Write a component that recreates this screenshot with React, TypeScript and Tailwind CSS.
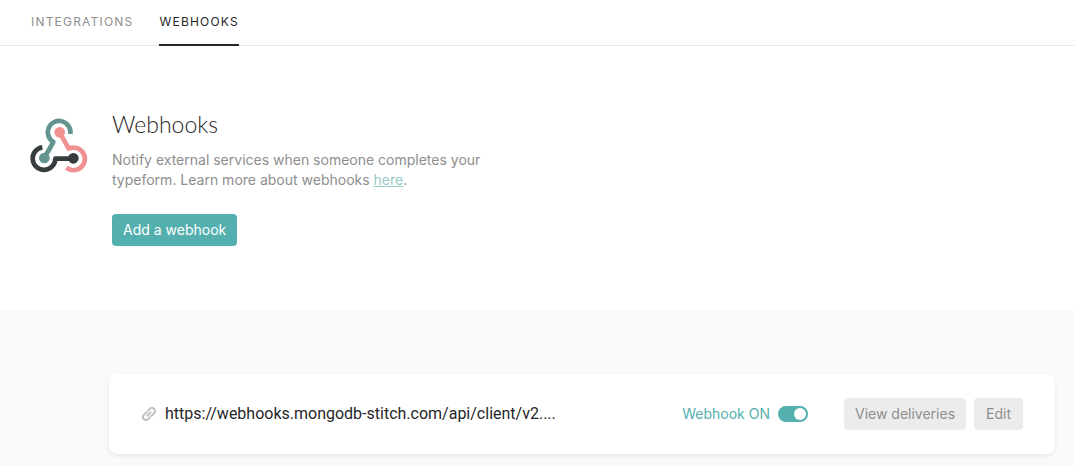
import { useState } from "react";

function WebhookLogo() {
  return (
    <svg width="57" height="54" viewBox="33 29 171 162" fill="none" strokeWidth="14" aria-hidden="true" className="shrink-0 overflow-visible">
      <path d="M151 77A34 34 0 1 0 100 101L73 149" stroke="#64948f" strokeLinejoin="round" />
      <path d="M67 117A34 34 0 1 0 106 151H160" stroke="#373c3f" strokeLinejoin="round" />
      <path d="M119 72L146 121A34 34 0 1 1 139 178" stroke="#f09090" strokeLinejoin="round" />
      <circle cx="73" cy="149" r="16" fill="#64948f" />
      <circle cx="160" cy="150" r="16" fill="#373c3f" />
      <circle cx="119" cy="72" r="16" fill="#f09090" />
    </svg>
  );
}

function LinkIcon() {
  return (
    <svg width="16" height="16" viewBox="0 0 16 16" fill="none" stroke="#bdbdbd" strokeWidth="1.9" aria-hidden="true" className="shrink-0">
      <path d="M6.600 5L8.800 2.900A3 3 0 0 1 13.100 7.200L11 9.300Q10.300 10 9.300 10" />
      <path d="M9.400 11L7.200 13.100A3 3 0 0 1 2.900 8.800L5 6.700Q5.700 6 6.700 6" />
      <path d="M5.800 10.200L10.200 5.800" />
    </svg>
  );
}

export default function App() {
  const [on, setOn] = useState(true);
  return (
    <div className="bg-white font-['Inter',sans-serif] text-sm text-[#8e8e8e]">
      <nav className="flex gap-[26px] border-b border-[#e8e8e8] pl-[31px] text-xs leading-4 tracking-widest">
        <a href="#integrations" className="pt-3.5 pb-[15px]">INTEGRATIONS</a>
        <a href="#webhooks" aria-current="page" className="-mb-px border-b-2 border-[#262627] pt-3.5 text-[#262627]">WEBHOOKS</a>
      </nav>
      <main>
        <section className="flex gap-6 pt-16 pb-16 pl-[31px]">
          <div className="pt-2"><WebhookLogo /></div>
          <div className="max-w-[380px]">
            <h1 className="font-['Lato',sans-serif] text-[23px] leading-7 font-light text-[#262627]">Webhooks</h1>
            <p className="mt-3 leading-5">
              Notify external services when someone completes your typeform. Learn more about webhooks{" "}
              <a href="#learn" className="text-[#99cbc8] underline">here</a>.
            </p>
            <button type="button" className="mt-6 h-8 rounded bg-[#54b0ae] px-[11px] text-white">Add a webhook</button>
          </div>
        </section>
        <section className="bg-[#fafafa] pt-16 pr-[19px] pb-3 pl-[109px]">
          <div className="flex h-20 items-center rounded-lg bg-white pr-8 pl-8 shadow-[0_2px_4px_rgba(0,0,0,0.08)]">
            <LinkIcon />
            <span className="ml-2 font-['Roboto',sans-serif] text-base text-[#262627]">https://webhooks.mongodb-stitch.com/api/client/v2....</span>
            <label className="ml-auto flex cursor-pointer items-center gap-2 text-[#54b0ae]">
              Webhook ON
              <input type="checkbox" role="switch" checked={on} onChange={() => setOn(!on)} className="h-4 w-[30px] appearance-none rounded-full bg-[#bdbdbd] before:mt-0.5 before:ml-0.5 before:block before:size-3 before:rounded-full before:bg-white checked:bg-[#54b0ae] checked:before:ml-4" />
            </label>
            <button type="button" className="ml-9 h-8 rounded bg-[#ececec] px-[11px]">View deliveries</button>
            <button type="button" className="ml-2 h-8 rounded bg-[#ececec] px-3">Edit</button>
          </div>
        </section>
      </main>
    </div>
  );
}
